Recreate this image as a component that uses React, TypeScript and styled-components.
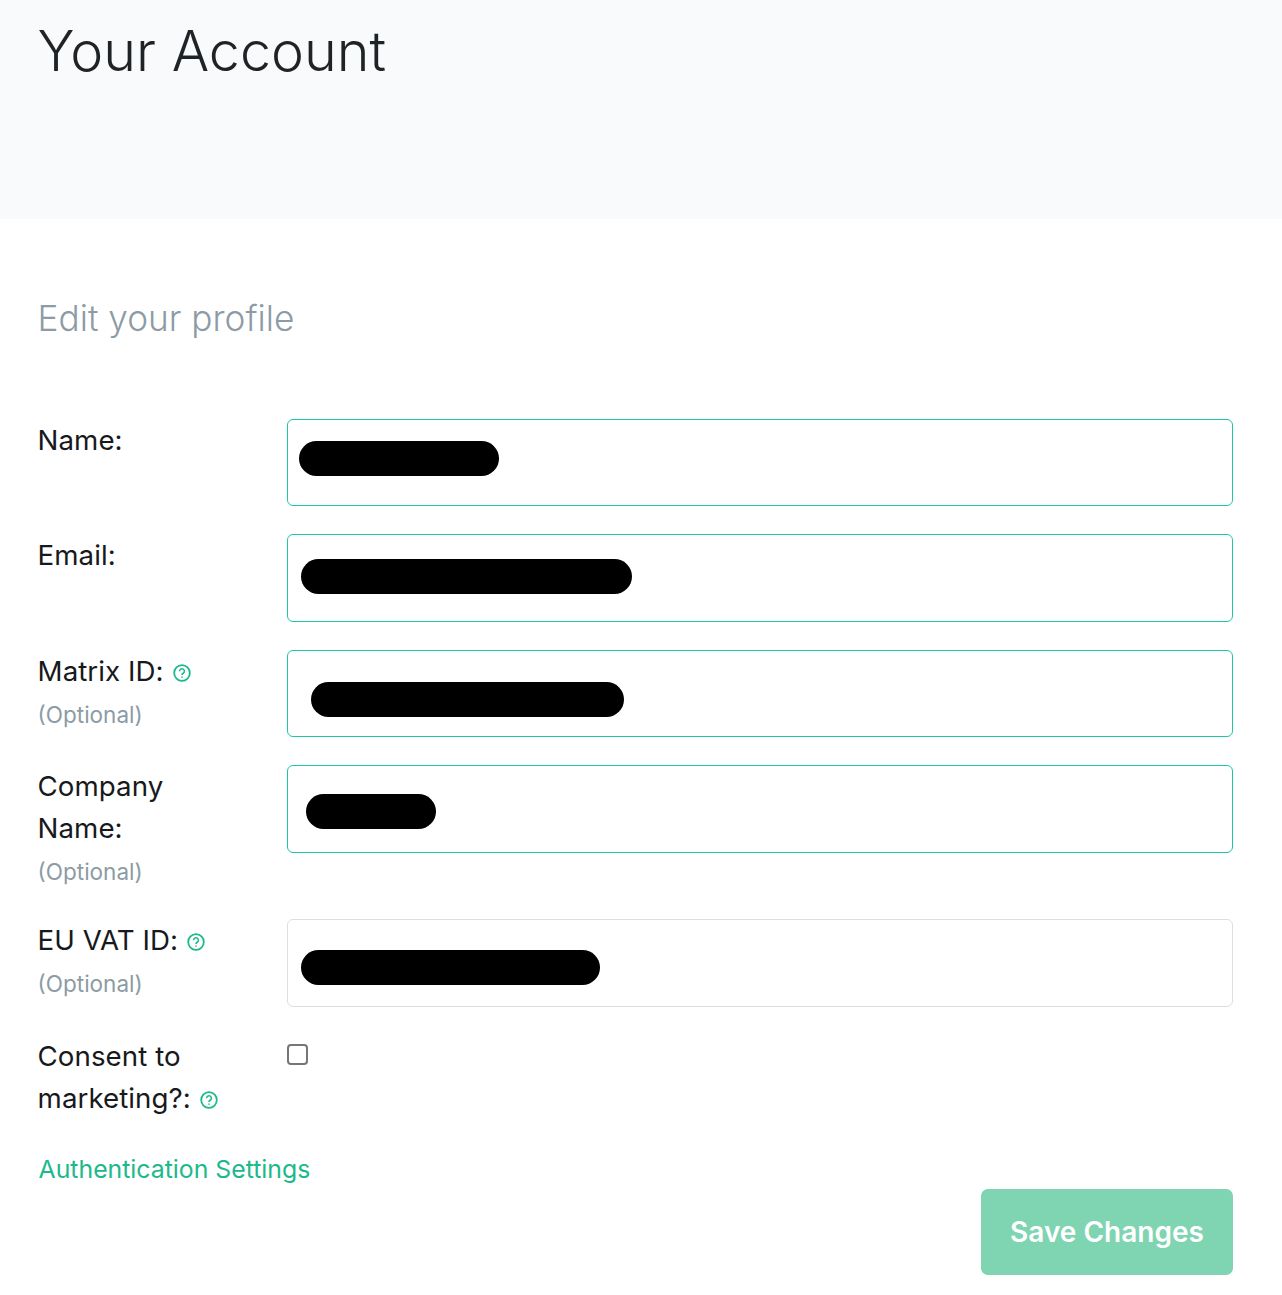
import React from 'react';
import styled, { createGlobalStyle } from 'styled-components';

const GlobalStyle = createGlobalStyle`
  html, body {
    margin: 0;
    background: #fff;
    font-family: Inter, "Liberation Sans", sans-serif;
    color: #17191c;
  }
`;

const Header = styled.header`
  height: 219px;
  box-sizing: border-box;
  background: #f9fafc;
  padding: 18px 37.6px 0;
`;

const Title = styled.h1`
  margin: 0;
  font-size: 55.6px;
  line-height: 65px;
  font-weight: 300;
  color: #1f2326;
`;

const Main = styled.main`
  padding: 76px 49px 20px 37.6px;
`;

const Subtitle = styled.h2`
  margin: 0 0 75.6px;
  font-size: 35.2px;
  line-height: 47px;
  height: 48px;
  font-weight: 300;
  color: #8c9ba5;
`;

const Row = styled.div`
  display: grid;
  grid-template-columns: 249.4px 1fr;
  margin-bottom: 28px;
`;

const Label = styled.label`
  display: block;
  width: 200px;
  font-size: 27.7px;
  line-height: 42px;
  font-weight: 400;
  letter-spacing: 0.05px;
`;

const Optional = styled.div`
  height: 42px;
  font-size: 22.5px;
  line-height: 46px;
  color: #8c9ba5;
`;

const Field = styled.div`
  position: relative;
  height: 87.5px;
`;

const TextInput = styled.input<{ $muted?: boolean }>`
  display: block;
  width: 100%;
  height: 100%;
  box-sizing: border-box;
  border: 1px solid ${p => (p.$muted ? '#dbdfe1' : '#1cc8a0')};
  border-radius: 6px;
  background: #fff;
  outline: none;
`;

const Redaction = styled.span<{ $left: number; $top: number; $width: number }>`
  position: absolute;
  left: ${p => p.$left}px;
  top: ${p => p.$top}px;
  width: ${p => p.$width}px;
  height: 35px;
  border-radius: 18px;
  background: #000;
`;

const Checkbox = styled.input`
  appearance: none;
  display: block;
  width: 21px;
  height: 21px;
  margin: 9px 0 0;
  box-sizing: border-box;
  border: 2px solid #767676;
  border-radius: 4px;
  background: #fff;
`;

const HelpIcon = styled.svg`
  width: 18px;
  height: 18px;
  margin-left: 9px;
  vertical-align: -1px;
  fill: none;
  stroke: #1bb98b;
`;

const Footer = styled.div`
  display: flex;
  flex-direction: column;
`;

const AuthLink = styled.a`
  height: 42px;
  font-size: 24.8px;
  line-height: 44px;
  margin-left: 1px;
  color: #1bb98b;
  text-decoration: none;
`;

const SaveButton = styled.button`
  align-self: flex-end;
  width: 252px;
  height: 86px;
  border: none;
  border-radius: 7px;
  background: #7fd4b1;
  color: #fff;
  font-family: inherit;
  font-size: 28px;
  font-weight: 600;
`;

const Help = () => (
  <HelpIcon viewBox="0 0 18 18">
    <circle cx="9" cy="9" r="7.8" strokeWidth="1.8" />
    <path d="M6.6 7.2a2.4 2.4 0 1 1 3.6 2.1c-.8.5-1.2.9-1.2 1.7" strokeWidth="1.6" />
    <path d="M9 12.4v1.3" strokeWidth="1.6" />
  </HelpIcon>
);

interface ProfileField {
  label: React.ReactNode;
  optional?: boolean;
  muted?: boolean;
  pill: { left: number; top: number; width: number };
}

const fields: ProfileField[] = [
  { label: 'Name:', pill: { left: 12, top: 22, width: 200 } },
  { label: 'Email:', pill: { left: 14, top: 25, width: 331 } },
  { label: <>Matrix ID:<Help /></>, optional: true, pill: { left: 24, top: 32, width: 313 } },
  { label: 'Company Name:', optional: true, pill: { left: 19, top: 29, width: 130 } },
  { label: <>EU VAT ID:<Help /></>, optional: true, muted: true, pill: { left: 14, top: 31, width: 299 } },
];

export default function App() {
  return (
    <>
      <GlobalStyle />
      <Header>
        <Title>Your Account</Title>
      </Header>
      <Main>
        <Subtitle>Edit your profile</Subtitle>
        {fields.map((field, index) => (
          <Row key={index}>
            <div>
              <Label>{field.label}</Label>
              {field.optional && <Optional>(Optional)</Optional>}
            </div>
            <Field>
              <TextInput readOnly $muted={field.muted} />
              <Redaction $left={field.pill.left} $top={field.pill.top} $width={field.pill.width} />
            </Field>
          </Row>
        ))}
        <Row>
          <Label>Consent to marketing?:<Help /></Label>
          <div>
            <Checkbox type="checkbox" />
          </div>
        </Row>
        <Footer>
          <AuthLink href="#">Authentication Settings</AuthLink>
          <SaveButton type="button">Save Changes</SaveButton>
        </Footer>
      </Main>
    </>
  );
}
